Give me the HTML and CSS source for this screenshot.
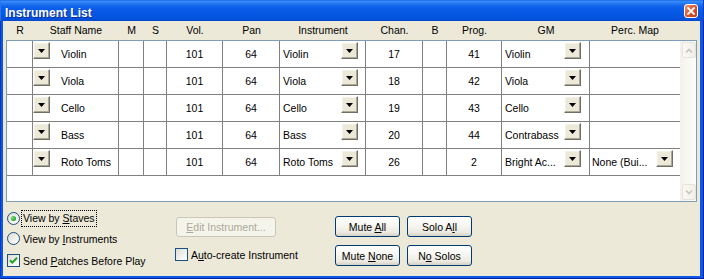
FILE: index.html
```html
<!DOCTYPE html>
<html>
<head>
<meta charset="utf-8">
<link rel="stylesheet" href="styles.css">
</head>
<body>
<div class="window">
  <div class="titlebar">
    <span class="title">Instrument List</span>
    <span class="close"><svg width="8" height="8" viewBox="0 0 8 8"><path d="M1 1L7 7M7 1L1 7" stroke="#fff" stroke-width="1.8" stroke-linecap="square"/></svg></span>
  </div>
  <div class="frame">
    <div class="body">
      <div class="header cols">
        <div>R</div><div>Staff Name</div><div>M</div><div>S</div><div>Vol.</div><div>Pan</div><div>Instrument</div><div>Chan.</div><div>B</div><div>Prog.</div><div>GM</div><div>Perc. Map</div>
      </div>
      <div class="box">
        <div class="rows">
          <div class="row cols">
            <div class="cell"></div>
            <div class="cell staff"><span class="dd"><svg width="7" height="4" viewBox="0 0 7 4"><path d="M0 0H7L3.5 4Z"/></svg></span><span class="txt">Violin</span></div>
            <div class="cell"></div><div class="cell"></div>
            <div class="cell num">101</div><div class="cell num">64</div>
            <div class="cell sel inst"><span class="txt">Violin</span><span class="dd"><svg width="7" height="4" viewBox="0 0 7 4"><path d="M0 0H7L3.5 4Z"/></svg></span></div>
            <div class="cell num">17</div><div class="cell"></div><div class="cell num">41</div>
            <div class="cell sel gm"><span class="txt">Violin</span><span class="dd"><svg width="7" height="4" viewBox="0 0 7 4"><path d="M0 0H7L3.5 4Z"/></svg></span></div>
            <div class="cell last"></div>
          </div>
          <div class="row cols">
            <div class="cell"></div>
            <div class="cell staff"><span class="dd"><svg width="7" height="4" viewBox="0 0 7 4"><path d="M0 0H7L3.5 4Z"/></svg></span><span class="txt">Viola</span></div>
            <div class="cell"></div><div class="cell"></div>
            <div class="cell num">101</div><div class="cell num">64</div>
            <div class="cell sel inst"><span class="txt">Viola</span><span class="dd"><svg width="7" height="4" viewBox="0 0 7 4"><path d="M0 0H7L3.5 4Z"/></svg></span></div>
            <div class="cell num">18</div><div class="cell"></div><div class="cell num">42</div>
            <div class="cell sel gm"><span class="txt">Viola</span><span class="dd"><svg width="7" height="4" viewBox="0 0 7 4"><path d="M0 0H7L3.5 4Z"/></svg></span></div>
            <div class="cell last"></div>
          </div>
          <div class="row cols">
            <div class="cell"></div>
            <div class="cell staff"><span class="dd"><svg width="7" height="4" viewBox="0 0 7 4"><path d="M0 0H7L3.5 4Z"/></svg></span><span class="txt">Cello</span></div>
            <div class="cell"></div><div class="cell"></div>
            <div class="cell num">101</div><div class="cell num">64</div>
            <div class="cell sel inst"><span class="txt">Cello</span><span class="dd"><svg width="7" height="4" viewBox="0 0 7 4"><path d="M0 0H7L3.5 4Z"/></svg></span></div>
            <div class="cell num">19</div><div class="cell"></div><div class="cell num">43</div>
            <div class="cell sel gm"><span class="txt">Cello</span><span class="dd"><svg width="7" height="4" viewBox="0 0 7 4"><path d="M0 0H7L3.5 4Z"/></svg></span></div>
            <div class="cell last"></div>
          </div>
          <div class="row cols">
            <div class="cell"></div>
            <div class="cell staff"><span class="dd"><svg width="7" height="4" viewBox="0 0 7 4"><path d="M0 0H7L3.5 4Z"/></svg></span><span class="txt">Bass</span></div>
            <div class="cell"></div><div class="cell"></div>
            <div class="cell num">101</div><div class="cell num">64</div>
            <div class="cell sel inst"><span class="txt">Bass</span><span class="dd"><svg width="7" height="4" viewBox="0 0 7 4"><path d="M0 0H7L3.5 4Z"/></svg></span></div>
            <div class="cell num">20</div><div class="cell"></div><div class="cell num">44</div>
            <div class="cell sel gm"><span class="txt">Contrabass</span><span class="dd"><svg width="7" height="4" viewBox="0 0 7 4"><path d="M0 0H7L3.5 4Z"/></svg></span></div>
            <div class="cell last"></div>
          </div>
          <div class="row cols">
            <div class="cell"></div>
            <div class="cell staff"><span class="dd"><svg width="7" height="4" viewBox="0 0 7 4"><path d="M0 0H7L3.5 4Z"/></svg></span><span class="txt">Roto Toms</span></div>
            <div class="cell"></div><div class="cell"></div>
            <div class="cell num">101</div><div class="cell num">64</div>
            <div class="cell sel inst"><span class="txt">Roto Toms</span><span class="dd"><svg width="7" height="4" viewBox="0 0 7 4"><path d="M0 0H7L3.5 4Z"/></svg></span></div>
            <div class="cell num">26</div><div class="cell"></div><div class="cell num">2</div>
            <div class="cell sel gm"><span class="txt">Bright Ac...</span><span class="dd"><svg width="7" height="4" viewBox="0 0 7 4"><path d="M0 0H7L3.5 4Z"/></svg></span></div>
            <div class="cell last sel perc"><span class="txt">None (Bui...</span><span class="dd"><svg width="7" height="4" viewBox="0 0 7 4"><path d="M0 0H7L3.5 4Z"/></svg></span></div>
          </div>
        </div>
        <div class="scroll">
          <span class="sb"><svg width="8" height="5" viewBox="0 0 8 5"><path d="M1 4.5L4 1.5L7 4.5" fill="none" stroke="#C9C7BC" stroke-width="1.6"/></svg></span>
          <span class="sb"><svg width="8" height="5" viewBox="0 0 8 5"><path d="M1 0.5L4 3.5L7 0.5" fill="none" stroke="#C9C7BC" stroke-width="1.6"/></svg></span>
        </div>
      </div>
      <div class="bottom">
        <div class="col-left">
          <div class="opt opt1"><span class="radio on"><span class="dot"></span></span><span class="lbl focus">View by <u>S</u>taves</span></div>
          <div class="opt opt2"><span class="radio"></span><span class="lbl">View by <u>I</u>nstruments</span></div>
          <div class="opt opt3"><span class="check"><svg width="11" height="11" viewBox="0 0 11 11"><path d="M2 5.2L4.3 7.6L9 2.8" fill="none" stroke="#21A121" stroke-width="2"/></svg></span><span class="lbl">Send <u>P</u>atches Before Play</span></div>
        </div>
        <div class="col-mid">
          <div class="btn disabled"><span><u>E</u>dit Instrument...</span></div>
          <div class="opt opt4"><span class="check"></span><span class="lbl">A<u>u</u>to-create Instrument</span></div>
        </div>
        <div class="col-right">
          <div class="btn"><span>Mute <u>A</u>ll</span></div>
          <div class="btn"><span>Solo A<u>l</u>l</span></div>
          <div class="btn"><span>Mute <u>N</u>one</span></div>
          <div class="btn"><span>N<u>o</u> Solos</span></div>
        </div>
      </div>
    </div>
  </div>
</div>
</body>
</html>
```
FILE: styles.css
```css
* { box-sizing: border-box; }
html, body { margin: 0; padding: 0; }
body {
  width: 704px;
  height: 279px;
  overflow: hidden;
  font-family: "Liberation Sans", Arial, sans-serif;
  font-size: 10.5px;
  color: #000;
}
.window {
  display: flex;
  flex-direction: column;
  width: 704px;
  height: 279px;
}
.titlebar {
  height: 21px;
  flex: none;
  display: flex;
  align-items: flex-start;
  justify-content: space-between;
  padding: 0 6px 0 5px;
  background: linear-gradient(180deg, #0A5BE0 0px, #3C8FF8 1px, #2A7DF3 3px, #0C5FE8 7px, #0558E4 14px, #0452DB 19px, #0547D0 21px);
  box-shadow: inset 1px 0 #2C74EC, inset -1px 0 #0A3CC4;
}
.title {
  color: #fff;
  font-weight: bold;
  font-size: 12px;
  line-height: 12px;
  margin-top: 7px;
  text-shadow: 1px 1px 0 #0A2A9A;
}
.close {
  width: 14px;
  height: 14px;
  margin-top: 4px;
  border: 1px solid #fff;
  border-radius: 3px;
  background: linear-gradient(135deg, #EE9A78 0%, #DD5A32 45%, #C23A12 100%);
  display: flex;
  align-items: center;
  justify-content: center;
}
.frame {
  flex: 1;
  display: flex;
  padding: 0 4px 3px 3px;
  background: #0C58E4;
  box-shadow: inset 1px 0 #0838C2, inset -1px 0 #0020A8, inset 0 -1px #0020A8;
}
.body {
  flex: 1;
  display: flex;
  flex-direction: column;
  background: #ECE9D8;
  padding: 0 3px;
}
.cols {
  display: grid;
  grid-template-columns: 26px 86px 25px 23px 56px 57px 86px 57px 24px 55px 88px 90px;
}
.header {
  height: 19px;
  padding-left: 1px;
  line-height: 19px;
  text-align: center;
  white-space: nowrap;
}
.box {
  height: 162px;
  flex: none;
  border: 1px solid #7F9DB9;
  background: #fff;
  display: flex;
}
.rows {
  flex: 1;
}
.row {
  height: 27px;
  border-bottom: 1px solid #808080;
}
.cell {
  border-right: 1px solid #808080;
  display: flex;
  align-items: center;
  white-space: nowrap;
  overflow: hidden;
}
.cell.last { border-right: none; }
.num { justify-content: center; }
.dd {
  flex: none;
  width: 17px;
  height: 17px;
  align-self: flex-start;
  margin-top: 1px;
  background: #ECE9D8;
  border: 1px solid;
  border-color: #FFFFFF #716F64 #716F64 #FFFFFF;
  box-shadow: inset -1px -1px #ACA899, inset 1px 1px #F4F2E8;
  display: flex;
  align-items: center;
  justify-content: center;
}
.dd svg { display: block; }
.staff .txt { margin-left: 11px; }
.sel { padding-left: 3px; }
.sel .txt { flex: 1; }
.inst .dd { margin-right: 7px; }
.gm .dd { margin-right: 8px; }
.perc { padding-left: 2px; }
.perc .dd { margin-right: 7px; }
.scroll {
  width: 16px;
  flex: none;
  display: flex;
  flex-direction: column;
  justify-content: space-between;
  padding: 1px 0 1px 2px;
  background: linear-gradient(90deg, #F3F1EB, #FDFDFA);
}
.sb {
  width: 14px;
  height: 16px;
  border: 1px solid #E6E4DA;
  border-radius: 2px;
  background: linear-gradient(90deg, #F9F8F4, #F1EFE8);
  display: flex;
  align-items: center;
  justify-content: center;
}
.sb svg { display: block; }
.bottom {
  flex: 1;
  display: flex;
  align-items: flex-start;
}
.col-left {
  width: 169px;
  padding-left: 1px;
  padding-top: 8px;
}
.opt {
  display: flex;
  align-items: center;
  height: 17px;
  white-space: nowrap;
}
.opt2 { margin-top: 3px; }
.opt3 { margin-top: 5px; }
.radio {
  width: 13px;
  height: 13px;
  border-radius: 50%;
  border: 1px solid #1C5180;
  background: linear-gradient(135deg, #DCDCD7, #FFFFFF);
  display: flex;
  align-items: center;
  justify-content: center;
  flex: none;
}
.dot {
  width: 5px;
  height: 5px;
  border-radius: 50%;
  background: radial-gradient(circle at 35% 35%, #7BE07A, #21A121 70%);
}
.check {
  width: 13px;
  height: 13px;
  border: 1px solid #1C5180;
  background: linear-gradient(135deg, #DCDCD7, #FFFFFF);
  display: flex;
  align-items: center;
  justify-content: center;
  flex: none;
}
.check svg { display: block; }
.lbl { margin-left: 3px; }
.opt1 .lbl {
  margin-left: 2px;
  padding: 1px 1px;
  outline: 1px dotted #000;
  outline-offset: 0;
  line-height: 13px;
}
.col-mid {
  width: 160px;
  padding-top: 15px;
}
.btn {
  height: 21px;
  border: 1px solid #003C74;
  border-radius: 3px;
  background: linear-gradient(180deg, #FFFFFF 0%, #F7F6F1 45%, #ECEAE1 80%, #D6D0C5 100%);
  display: flex;
  align-items: center;
  justify-content: center;
  white-space: nowrap;
}
.btn.disabled {
  width: 100px;
  height: 20px;
  margin-left: 1px;
  border-color: #C9C7BA;
  background: #F5F4EA;
  color: #ACA899;
}
.opt4 { margin-top: 9px; }
.col-right {
  display: grid;
  grid-template-columns: 65px 65px;
  grid-auto-rows: 21px;
  column-gap: 7px;
  row-gap: 8px;
  padding-top: 14px;
}
u { text-decoration: underline; text-underline-offset: 1px; }
```
